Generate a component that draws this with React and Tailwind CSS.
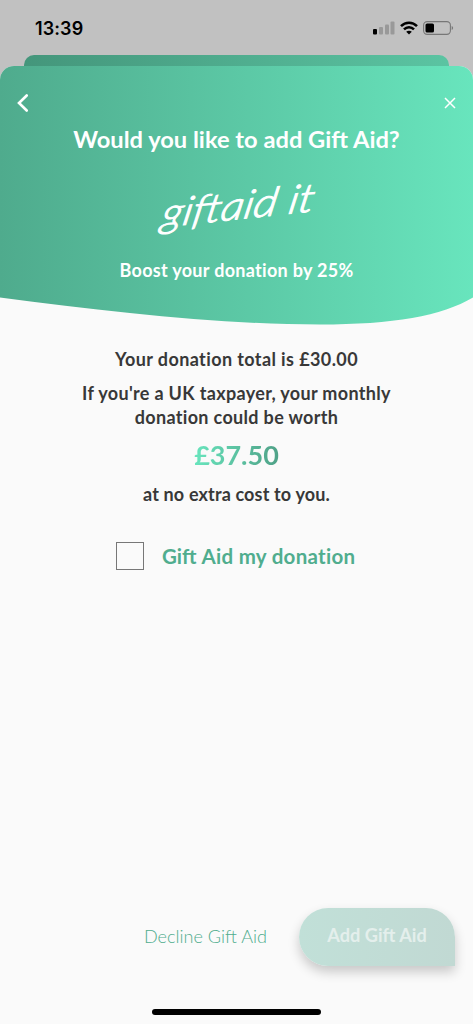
const StatusBar = () => (
    <div className="flex h-[55px] shrink-0 items-center justify-between pt-[1px] pr-[19px] pl-[35px] text-black">
        <span className="pt-[1px] font-['Inter',sans-serif] text-[18px] font-semibold tracking-[0.1px]">13:39</span>
        <div className="flex items-center gap-[5px]">
            <svg width="22" height="14" viewBox="0 0 22 14">
                <rect x="0" y="8" width="4" height="5.5" rx="1" fill="#000" />
                <rect x="6" y="6" width="4" height="7.5" rx="1" fill="#999" />
                <rect x="12" y="3.5" width="4" height="10" rx="1" fill="#999" />
                <rect x="17.5" y="0.5" width="4" height="13" rx="1" fill="#999" />
            </svg>
            <svg width="18" height="14" viewBox="0 0 18 14" fill="none" stroke="#000" strokeWidth="2.5">
                <path d="M1 5.2C5.4 0.6 12.6 0.6 17 5.2" />
                <path d="M4 8.4C6.8 5.5 11.2 5.5 14 8.4" />
                <path d="M9 13.6L6.2 10.7C7.8 9.3 10.2 9.3 11.8 10.7Z" fill="#000" stroke="none" />
            </svg>
            <svg width="31" height="14" viewBox="0 0 31 14">
                <rect x="0.6" y="0.6" width="26.8" height="12.8" rx="3.6" fill="none" stroke="#777" strokeWidth="1.1" />
                <rect x="2.5" y="2.5" width="8.5" height="9" rx="1.6" fill="#000" />
                <path d="M28.7 4.9C30.6 5.6 30.6 8.4 28.7 9.1Z" fill="#777" />
            </svg>
        </div>
    </div>
);

const Header = () => (
    <header className="relative h-[259px] rounded-t-[14px] bg-linear-to-r from-[#4fab8d] to-[#68e5bd] text-center text-white">
        <div className="flex h-[58px] items-end justify-between pr-[17px] pb-[11px] pl-[17px]">
            <button aria-label="Back" className="mb-[1px]">
                <svg width="12" height="18" viewBox="0 0 12 18" fill="none" stroke="#fff" strokeWidth="2.6" strokeLinecap="round">
                    <path d="M9.7 1.5L2 9L9.7 16.5" />
                </svg>
            </button>
            <button aria-label="Close" className="mb-[4px]">
                <svg width="12" height="12" viewBox="0 0 12 12" fill="none" stroke="#fff" strokeWidth="1.5">
                    <path d="M1 1L11 11M11 1L1 11" />
                </svg>
            </button>
        </div>
        <h1 className="h-[30px] text-[23.7px] leading-[30px] font-bold whitespace-nowrap">Would you like to add Gift Aid?</h1>
        <div className="flex h-[101px] items-center justify-center pl-[4px]">
            <span className="-rotate-6 skew-x-[-14deg] scale-x-118 text-[39px] leading-none font-light whitespace-nowrap italic [-webkit-text-stroke:1px_white]">giftaid it</span>
        </div>
        <p className="h-[30px] text-[18px] leading-[30px] font-bold tracking-[0.3px] whitespace-nowrap">Boost your donation by 25%</p>
        <svg className="absolute bottom-0 left-0" width="473" height="28" viewBox="0 0 473 28">
            <path d="M0 0.5C110 15 220 27.5 320 27.5C393 27.5 442 19 473 0.5V28H0Z" fill="#fafafa" />
        </svg>
    </header>
);

export default function App() {
    return (
        <div className="flex h-[1024px] w-[473px] flex-col overflow-hidden bg-[#c1c1c1] font-['Lato',sans-serif]">
            <StatusBar />
            <div className="mx-[24px] -mb-[14px] h-[25px] shrink-0 rounded-t-[10px] bg-linear-to-r from-[#44967b] to-[#5bc4a2]" />
            <main className="flex flex-1 flex-col rounded-t-[14px] bg-[#fafafa]">
                <Header />
                <section className="flex flex-col items-center pt-[22px] text-center text-[18px] leading-[24px] font-bold tracking-[0.33px] whitespace-nowrap text-[#383838]">
                    <p className="tracking-[0.4px]">Your donation total is £30.00</p>
                    <p className="mt-[10px]">If you're a UK taxpayer, your monthly</p>
                    <p>donation could be worth</p>
                    <p className="mt-[8px] bg-linear-to-r from-[#68e5bd] to-[#4fa187] bg-clip-text text-[27px] leading-[36px] tracking-normal text-transparent">£37.50</p>
                    <p className="mt-[9px] tracking-[0.15px]">at no extra cost to you.</p>
                </section>
                <label className="mt-[36px] ml-[116px] flex items-center">
                    <input type="checkbox" className="size-[28px] appearance-none border border-[#777] bg-[#fafafa]" />
                    <span className="ml-[18px] text-[20.5px] leading-[28px] font-bold whitespace-nowrap text-[#50ad8e]">
                        Gift <span className="tracking-[0.28px]">Aid my donation</span>
                    </span>
                </label>
                <footer className="mt-auto flex h-[58px] items-center justify-end pr-[18px]">
                    <button className="mr-[32px] pb-[1px] text-[18.1px] font-light whitespace-nowrap text-[#50ad8e]">Decline Gift Aid</button>
                    <button className="h-[58px] w-[156px] rounded-[29px] rounded-br-none bg-linear-to-r from-[#c1e0d8] to-[#c1d9d3] pb-[3px] text-[18.2px] font-bold whitespace-nowrap text-[#e4efec] shadow-[0_6px_12px_rgba(0,0,0,0.2)]">
                        Add Gift Aid
                    </button>
                </footer>
                <div className="mx-auto mt-[43px] mb-[9px] h-[6px] w-[169px] rounded-full bg-black" />
            </main>
        </div>
    );
}
